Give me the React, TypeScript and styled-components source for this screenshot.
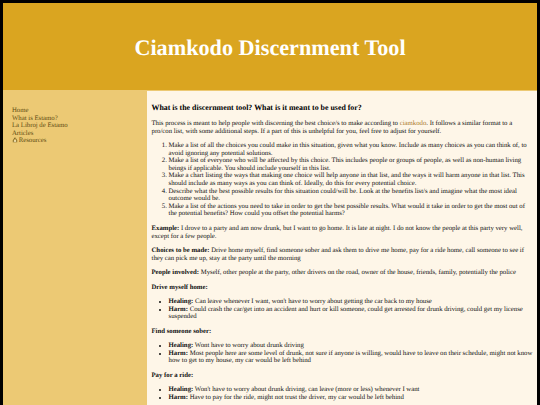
import styled, { createGlobalStyle } from "styled-components";

const GlobalStyle = createGlobalStyle`
html, body {
  margin: 0;
  padding: 0;
  height: 100%;
  overflow: hidden;
  background-color: black;
}
body {
  font-family: "Liberation Serif", "Times New Roman", serif;
  font-size: 6.75px;
  line-height: 7.6px;
  text-rendering: geometricPrecision;
}
`;

const RecycleIcon = () => (
  <RecycleSvg viewBox="0 0 12 11" aria-hidden="true">
    <path d="M6 1 L2 8 M1.5 9.5 H10.5 M10 8 L7 2.5" fill="none" stroke="#5f4c12" strokeWidth="1.6" />
    <path d="M3.5 9.5 H8.5 L6 5.5 Z" fill="#fdf3d0" />
  </RecycleSvg>
);

const App = () => {
  return (
    <Page>
      <GlobalStyle />
      <Header>
        <Title>Ciamkodo Discernment Tool</Title>
      </Header>
      <Body>
        <Side>
          <NavLink>Home</NavLink>
          <NavLink>What is Estamo?</NavLink>
          <NavLink>La Libroj de Estamo</NavLink>
          <NavLink>Articles</NavLink>
          <NavLink><RecycleIcon />Resources</NavLink>
        </Side>
        <Main>
          <Heading>What is the discernment tool? What is it meant to be used for?</Heading>
          <Para>
            This process is meant to help people with discerning the best choice/s to make according to <TextLink>ciamkodo</TextLink>. It follows a similar format to a pro/con list, with some additional steps. If a part of this is unhelpful for you, feel free to adjust for yourself.
          </Para>
          <Steps>
            <li>Make a list of all the choices you could make in this situation, given what you know. Include as many choices as you can think of, to avoid ignoring any potential solutions.</li>
            <li>Make a list of everyone who will be affected by this choice. This includes people or groups of people, as well as non-human living beings if applicable. You should include yourself in this list.</li>
            <li>Make a chart listing the ways that making one choice will help anyone in that list, and the ways it will harm anyone in that list. This should include as many ways as you can think of. Ideally, do this for every potential choice.</li>
            <li>Describe what the best possible results for this situation could/will be. Look at the benefits list/s and imagine what the most ideal outcome would be.</li>
            <li>Make a list of the actions you need to take in order to get the best possible results. What would it take in order to get the most out of the potential benefits? How could you offset the potential harms?</li>
          </Steps>
          <Para>
            <b>Example:</b> I drove to a party and am now drunk, but I want to go home. It is late at night. I do not know the people at this party very well, except for a few people.
          </Para>
          <Para>
            <b>Choices to be made:</b> Drive home myself, find someone sober and ask them to drive me home, pay for a ride home, call someone to see if they can pick me up, stay at the party until the morning
          </Para>
          <Para>
            <b>People involved:</b> Myself, other people at the party, other drivers on the road, owner of the house, friends, family, potentially the police
          </Para>
          <Para><b>Drive myself home:</b></Para>
          <Points>
            <li><b>Healing:</b> Can leave whenever I want, won't have to worry about getting the car back to my house</li>
            <li><b>Harm:</b> Could crash the car/get into an accident and hurt or kill someone, could get arrested for drunk driving, could get my license suspended</li>
          </Points>
          <Para><b>Find someone sober:</b></Para>
          <Points>
            <li><b>Healing:</b> Wont have to worry about drunk driving</li>
            <li><b>Harm:</b> Most people here are some level of drunk, not sure if anyone is willing, would have to leave on their schedule, might not know how to get to my house, my car would be left behind</li>
          </Points>
          <Para><b>Pay for a ride:</b></Para>
          <Points>
            <li><b>Healing:</b> Won't have to worry about drunk driving, can leave (more or less) whenever I want</li>
            <li><b>Harm:</b> Have to pay for the ride, might not trust the driver, my car would be left behind</li>
          </Points>
        </Main>
      </Body>
    </Page>
  );
};
export default App;

const Page = styled.div`
height: 405px;
box-sizing: border-box;
padding: 3px 3px 0 3px;
display: flex;
flex-direction: column;
overflow: hidden;
`;
const Header = styled.div`
height: 88px;
flex-shrink: 0;
box-sizing: border-box;
padding-top: 3px;
background-color: #daa520;
border-bottom: 1px solid #ecc974;
display: flex;
justify-content: center;
align-items: center;
`;
const Title = styled.h1`
margin: 0;
color: white;
font-size: 22.2px;
line-height: 26px;
font-weight: bold;
`;
const Body = styled.div`
flex: 1;
display: flex;
min-height: 0;
`;
const Side = styled.div`
width: 144px;
flex-shrink: 0;
box-sizing: border-box;
padding: 16px 9px;
background-color: #ecc974;
display: flex;
flex-direction: column;
`;
const NavLink = styled.a`
color: #5f4c12;
`;
const RecycleSvg = styled.svg`
width: 6px;
height: 5.5px;
margin-right: 0.7px;
vertical-align: -0.3px;
`;
const Main = styled.div`
flex: 1;
box-sizing: border-box;
padding: 12px 5px 0 4.5px;
background-color: #fef6e8;
color: #111;
overflow: hidden;
`;
const Heading = styled.div`
font-size: 7.9px;
line-height: 9px;
font-weight: bold;
color: black;
margin-bottom: 8px;
`;
const Para = styled.p`
margin: 0 0 6.9px 0;
`;
const TextLink = styled.a`
color: #a9782a;
`;
const Steps = styled.ol`
margin: 0 0 6.9px 0;
padding-left: 17px;
`;
const Points = styled.ul`
margin: 0 -3px 6.9px 0;
padding-left: 17px;
`;
